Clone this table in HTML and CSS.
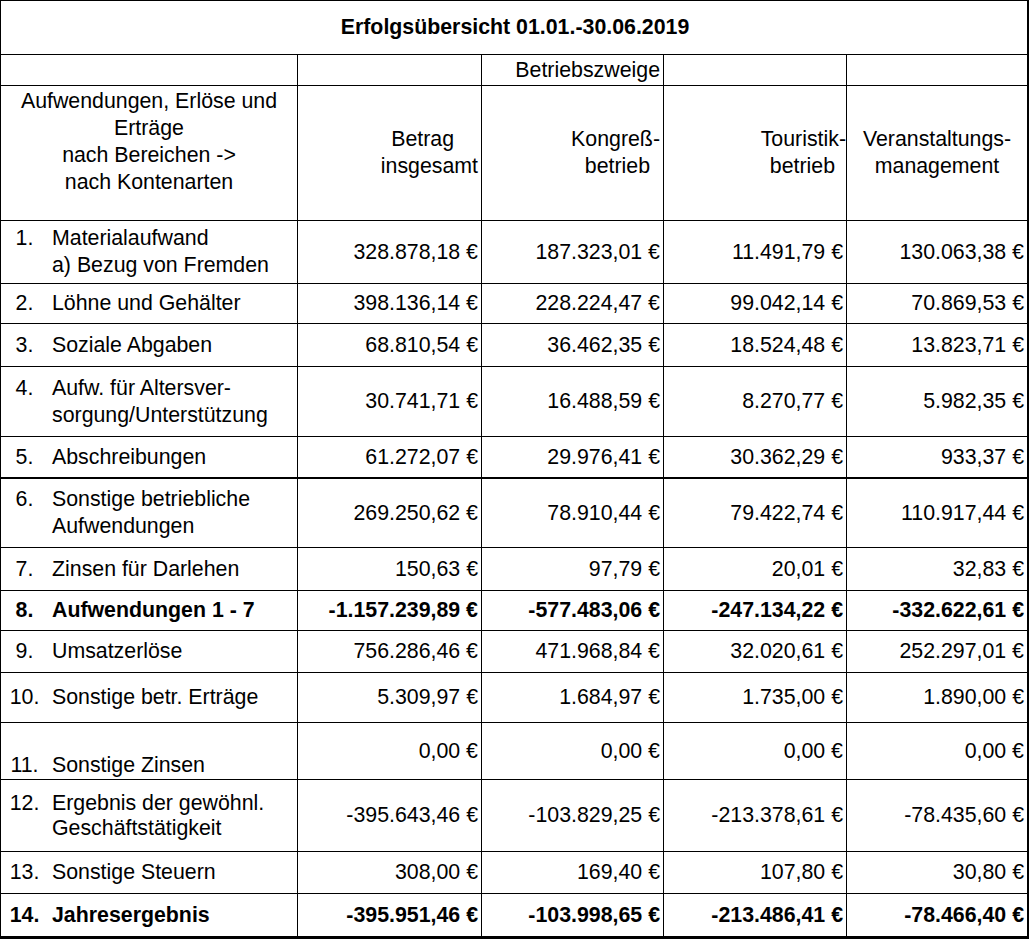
FILE: index.html
```html
<!DOCTYPE html>
<html lang="de">
<head>
<meta charset="utf-8">
<title>Erfolgsübersicht 01.01.-30.06.2019</title>
<link rel="stylesheet" href="styles.css">
</head>
<body>
<div class="sheet" role="table">
  <div class="row" role="row">
    <div class="cell title" role="columnheader">Erfolgsübersicht 01.01.-30.06.2019</div>
  </div>
  <div class="row" role="row">
    <div class="cell"></div>
    <div class="cell"></div>
    <div class="cell val">Betriebszweige</div>
    <div class="cell"></div>
    <div class="cell"></div>
  </div>
  <div class="row" role="row">
    <div class="cell head-label" role="columnheader">Aufwendungen, Erlöse und Erträge<br>nach Bereichen -&gt;<br>nach Kontenarten</div>
    <div class="cell head" role="columnheader"><span class="ln pr-27">Betrag</span><span class="ln pr-3">insgesamt</span></div>
    <div class="cell head" role="columnheader"><span class="ln pr-3">Kongreß-</span><span class="ln pr-13">betrieb</span></div>
    <div class="cell head" role="columnheader"><span class="ln pr-0">Touristik-</span><span class="ln pr-11">betrieb</span></div>
    <div class="cell head head-center" role="columnheader"><span class="ln">Veranstaltungs-</span><span class="ln">management</span></div>
  </div>

  <div class="row" role="row">
    <div class="cell label"><div class="entry"><span class="num">1.</span><span class="txt">Materialaufwand<br>a) Bezug von Fremden</span></div></div>
    <div class="cell val">328.878,18 €</div>
    <div class="cell val">187.323,01 €</div>
    <div class="cell val">11.491,79 €</div>
    <div class="cell val">130.063,38 €</div>
  </div>
  <div class="row" role="row">
    <div class="cell label"><div class="entry"><span class="num">2.</span><span class="txt">Löhne und Gehälter</span></div></div>
    <div class="cell val">398.136,14 €</div>
    <div class="cell val">228.224,47 €</div>
    <div class="cell val">99.042,14 €</div>
    <div class="cell val">70.869,53 €</div>
  </div>
  <div class="row" role="row">
    <div class="cell label"><div class="entry"><span class="num">3.</span><span class="txt">Soziale Abgaben</span></div></div>
    <div class="cell val">68.810,54 €</div>
    <div class="cell val">36.462,35 €</div>
    <div class="cell val">18.524,48 €</div>
    <div class="cell val">13.823,71 €</div>
  </div>
  <div class="row" role="row">
    <div class="cell label"><div class="entry"><span class="num">4.</span><span class="txt">Aufw. für Altersver-<br>sorgung/Unterstützung</span></div></div>
    <div class="cell val">30.741,71 €</div>
    <div class="cell val">16.488,59 €</div>
    <div class="cell val">8.270,77 €</div>
    <div class="cell val">5.982,35 €</div>
  </div>
  <div class="row row-sep" role="row">
    <div class="cell label"><div class="entry"><span class="num">5.</span><span class="txt">Abschreibungen</span></div></div>
    <div class="cell val">61.272,07 €</div>
    <div class="cell val">29.976,41 €</div>
    <div class="cell val">30.362,29 €</div>
    <div class="cell val">933,37 €</div>
  </div>
  <div class="row" role="row">
    <div class="cell label"><div class="entry"><span class="num">6.</span><span class="txt">Sonstige betriebliche<br>Aufwendungen</span></div></div>
    <div class="cell val">269.250,62 €</div>
    <div class="cell val">78.910,44 €</div>
    <div class="cell val">79.422,74 €</div>
    <div class="cell val">110.917,44 €</div>
  </div>
  <div class="row" role="row">
    <div class="cell label"><div class="entry"><span class="num">7.</span><span class="txt">Zinsen für Darlehen</span></div></div>
    <div class="cell val">150,63 €</div>
    <div class="cell val">97,79 €</div>
    <div class="cell val">20,01 €</div>
    <div class="cell val">32,83 €</div>
  </div>
  <div class="row row-bold" role="row">
    <div class="cell label"><div class="entry"><span class="num">8.</span><span class="txt">Aufwendungen 1 - 7</span></div></div>
    <div class="cell val">-1.157.239,89 €</div>
    <div class="cell val">-577.483,06 €</div>
    <div class="cell val">-247.134,22 €</div>
    <div class="cell val">-332.622,61 €</div>
  </div>
  <div class="row" role="row">
    <div class="cell label"><div class="entry"><span class="num">9.</span><span class="txt">Umsatzerlöse</span></div></div>
    <div class="cell val">756.286,46 €</div>
    <div class="cell val">471.968,84 €</div>
    <div class="cell val">32.020,61 €</div>
    <div class="cell val">252.297,01 €</div>
  </div>
  <div class="row" role="row">
    <div class="cell label"><div class="entry"><span class="num">10.</span><span class="txt">Sonstige betr. Erträge</span></div></div>
    <div class="cell val">5.309,97 €</div>
    <div class="cell val">1.684,97 €</div>
    <div class="cell val">1.735,00 €</div>
    <div class="cell val">1.890,00 €</div>
  </div>
  <div class="row" role="row">
    <div class="cell label label-bottom"><div class="entry"><span class="num">11.</span><span class="txt">Sonstige Zinsen</span></div></div>
    <div class="cell val">0,00 €</div>
    <div class="cell val">0,00 €</div>
    <div class="cell val">0,00 €</div>
    <div class="cell val">0,00 €</div>
  </div>
  <div class="row" role="row">
    <div class="cell label label-tight"><div class="entry"><span class="num">12.</span><span class="txt">Ergebnis der gewöhnl.<br>Geschäftstätigkeit</span></div></div>
    <div class="cell val">-395.643,46 €</div>
    <div class="cell val">-103.829,25 €</div>
    <div class="cell val">-213.378,61 €</div>
    <div class="cell val">-78.435,60 €</div>
  </div>
  <div class="row" role="row">
    <div class="cell label"><div class="entry"><span class="num">13.</span><span class="txt">Sonstige Steuern</span></div></div>
    <div class="cell val">308,00 €</div>
    <div class="cell val">169,40 €</div>
    <div class="cell val">107,80 €</div>
    <div class="cell val">30,80 €</div>
  </div>
  <div class="row row-bold row-last" role="row">
    <div class="cell label"><div class="entry"><span class="num">14.</span><span class="txt">Jahresergebnis</span></div></div>
    <div class="cell val">-395.951,46 €</div>
    <div class="cell val">-103.998,65 €</div>
    <div class="cell val">-213.486,41 €</div>
    <div class="cell val">-78.466,40 €</div>
  </div>
</div>
</body>
</html>
```

FILE: styles.css
```css
* {
  box-sizing: border-box;
}

body {
  margin: 0;
  background: #ffffff;
  color: #000000;
  font-family: "Liberation Sans", Arial, sans-serif;
  font-size: 21.33px;
  line-height: 27px;
}

.sheet {
  display: grid;
  width: 1029px;
  grid-template-columns: 297px 184px 182px 183px 182px;
  grid-template-rows: 54px 31px 135px 63px 40px 43px 70px 42px 69px 43px 40px 42px 50px 57px 72px 42px 45px;
  border-left: 1px solid #000;
  border-top: 1px solid #000;
}

.row {
  display: contents;
}

.cell {
  display: flex;
  align-items: center;
  border-right: 1px solid #000;
  border-bottom: 1px solid #000;
  min-width: 0;
}

.cell:last-child {
  border-right-width: 2px;
}

.title {
  grid-column: 1 / -1;
  justify-content: center;
  font-weight: bold;
  padding-left: 2px;
}

.row-sep .cell {
  border-bottom-width: 2px;
}

.row-last .cell {
  border-bottom-width: 3px;
}

.row-bold .cell {
  font-weight: bold;
}

.val {
  justify-content: flex-end;
  padding-right: 3px;
  white-space: nowrap;
}

.head-label {
  align-items: flex-start;
  justify-content: center;
  text-align: center;
  padding-top: 2px;
}

.head {
  flex-direction: column;
  justify-content: center;
  align-items: flex-end;
}

.head-center {
  align-items: center;
}

.ln {
  display: block;
  white-space: nowrap;
}

.pr-0 { padding-right: 0; }
.pr-3 { padding-right: 3px; }
.pr-11 { padding-right: 11px; }
.pr-13 { padding-right: 13px; }
.pr-27 { padding-right: 27px; }

.label {
  align-items: center;
}

.label-bottom {
  align-items: flex-end;
}

.label-tight {
  line-height: 25px;
}

.entry {
  display: flex;
  align-items: flex-start;
}

.num {
  flex: none;
  width: 47px;
  text-align: center;
}

.txt {
  margin-left: 4px;
  white-space: nowrap;
}
```
